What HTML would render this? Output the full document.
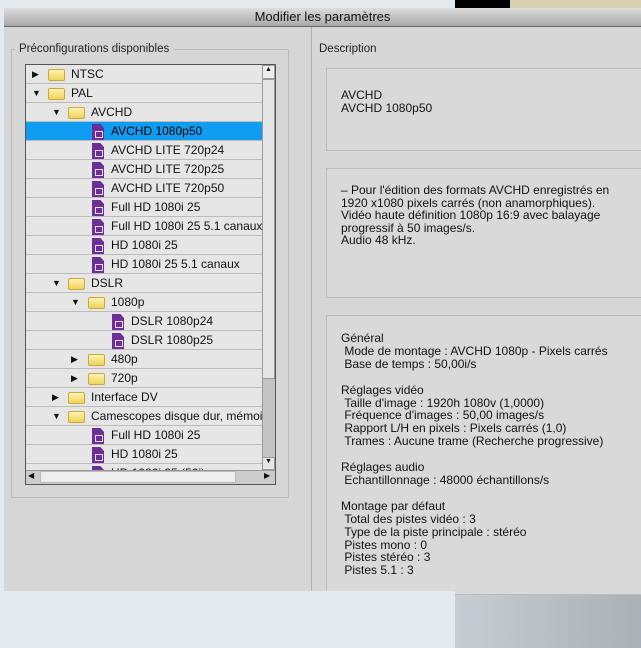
<!DOCTYPE html>
<html><head><meta charset="utf-8"><style>
*{margin:0;padding:0;box-sizing:border-box}
body{width:641px;height:648px;background:#e4eaed;position:relative;overflow:hidden;font-family:"Liberation Sans",sans-serif;font-size:12px;color:#111}
.abs{position:absolute}
#dlg{left:4px;top:8px;width:637px;height:583px;background:#d6d6d6}
#title{left:4px;top:8px;width:637px;height:19px;background:linear-gradient(#dcdcdc,#a9a9a9);border-bottom:1px solid #666;text-align:center;font-size:13px;line-height:18px}
.fs{border:1px solid #bdbdbd}
.lg{background:#d6d6d6;padding:0 4px;font-size:11.5px;color:#222}
#tree{left:25px;top:64px;width:251px;height:421px;border:1px solid #555;background:#e8e8e8;overflow:hidden}
.row{position:absolute;left:0;width:236px;height:19px;border-bottom:1px solid #bbb;white-space:nowrap;line-height:18px;font-size:12px;background:#e6e6e6}
.sel{background:#109cf0;color:#000}
.ar{position:absolute;top:0;font-size:9px}
.fo{position:absolute;top:4px;width:17px;height:12px;background:linear-gradient(#fff4b0,#efd25a);border:1px solid #c9a93a;border-radius:2px}
.fi{position:absolute;top:2px;width:12px;height:16px;background:#6b2f96;clip-path:polygon(0 0,70% 0,100% 25%,100% 100%,0 100%)}
.fi:after{content:"";position:absolute;left:3px;top:7px;width:6px;height:5px;border:1px solid #e7d8f3}
.tx{position:absolute;top:0}
.box{background:#d9d9d9;border:1px solid #bcbcbc;left:326px;width:320px;font-size:12px;line-height:12.5px;padding:0 0 0 14px;white-space:nowrap}
</style></head><body>
<div class="abs" style="left:455px;top:591px;width:186px;height:57px;background:linear-gradient(90deg,#c7ced3,#a9b1b6)"></div>
<div class="abs" style="left:455px;top:0;width:186px;height:8px;background:#000"></div>
<div class="abs" style="left:510px;top:0;width:131px;height:8px;background:#d8d0b0"></div>
<div id="dlg" class="abs"></div>
<div id="title" class="abs">Modifier les paramètres</div>
<div class="abs fs" style="left:11px;top:49px;width:278px;height:449px"></div>
<div class="abs lg" style="left:15px;top:43px">Préconfigurations disponibles</div>
<div class="abs" style="left:311px;top:27px;width:1px;height:564px;background:#b0b0b0"></div>
<div class="abs lg" style="left:315px;top:43px">Description</div>
<div id="tree" class="abs">
<div class="row" style="top:0"><span class="ar" style="left:6px">▶</span><span class="fo" style="left:22px"></span><span class="tx" style="left:45px">NTSC</span></div>
<div class="row" style="top:19px"><span class="ar" style="left:6px">▼</span><span class="fo" style="left:22px"></span><span class="tx" style="left:45px">PAL</span></div>
<div class="row" style="top:38px"><span class="ar" style="left:26px">▼</span><span class="fo" style="left:42px"></span><span class="tx" style="left:65px">AVCHD</span></div>
<div class="row sel" style="top:57px"><span class="fi" style="left:66px"></span><span class="tx" style="left:85px">AVCHD 1080p50</span></div>
<div class="row" style="top:76px"><span class="fi" style="left:66px"></span><span class="tx" style="left:85px">AVCHD LITE 720p24</span></div>
<div class="row" style="top:95px"><span class="fi" style="left:66px"></span><span class="tx" style="left:85px">AVCHD LITE 720p25</span></div>
<div class="row" style="top:114px"><span class="fi" style="left:66px"></span><span class="tx" style="left:85px">AVCHD LITE 720p50</span></div>
<div class="row" style="top:133px"><span class="fi" style="left:66px"></span><span class="tx" style="left:85px">Full HD 1080i 25</span></div>
<div class="row" style="top:152px"><span class="fi" style="left:66px"></span><span class="tx" style="left:85px">Full HD 1080i 25 5.1 canaux</span></div>
<div class="row" style="top:171px"><span class="fi" style="left:66px"></span><span class="tx" style="left:85px">HD 1080i 25</span></div>
<div class="row" style="top:190px"><span class="fi" style="left:66px"></span><span class="tx" style="left:85px">HD 1080i 25 5.1 canaux</span></div>
<div class="row" style="top:209px"><span class="ar" style="left:26px">▼</span><span class="fo" style="left:42px"></span><span class="tx" style="left:65px">DSLR</span></div>
<div class="row" style="top:228px"><span class="ar" style="left:45px">▼</span><span class="fo" style="left:62px"></span><span class="tx" style="left:85px">1080p</span></div>
<div class="row" style="top:247px"><span class="fi" style="left:86px"></span><span class="tx" style="left:105px">DSLR 1080p24</span></div>
<div class="row" style="top:266px"><span class="fi" style="left:86px"></span><span class="tx" style="left:105px">DSLR 1080p25</span></div>
<div class="row" style="top:285px"><span class="ar" style="left:45px">▶</span><span class="fo" style="left:62px"></span><span class="tx" style="left:85px">480p</span></div>
<div class="row" style="top:304px"><span class="ar" style="left:45px">▶</span><span class="fo" style="left:62px"></span><span class="tx" style="left:85px">720p</span></div>
<div class="row" style="top:323px"><span class="ar" style="left:26px">▶</span><span class="fo" style="left:42px"></span><span class="tx" style="left:65px">Interface DV</span></div>
<div class="row" style="top:342px"><span class="ar" style="left:26px">▼</span><span class="fo" style="left:42px"></span><span class="tx" style="left:65px">Camescopes disque dur, mémoi</span></div>
<div class="row" style="top:361px"><span class="fi" style="left:66px"></span><span class="tx" style="left:85px">Full HD 1080i 25</span></div>
<div class="row" style="top:380px"><span class="fi" style="left:66px"></span><span class="tx" style="left:85px">HD 1080i 25</span></div>
<div class="row" style="top:399px"><span class="fi" style="left:66px"></span><span class="tx" style="left:85px">HD 1080i 25 (50i)</span></div>
<div class="abs" style="left:236px;top:0;width:13px;height:405px;background:#c4c4c4;border-left:1px solid #999"></div>
<div class="abs" style="left:236px;top:0;width:13px;height:14px;background:#eee;border:1px solid #999;font-size:7px;text-align:center">▲</div>
<div class="abs" style="left:236px;top:14px;width:13px;height:300px;background:#e6e6e6;border:1px solid #999"></div>
<div class="abs" style="left:236px;top:392px;width:13px;height:13px;background:#e6e6e6;border:1px solid #999;font-size:7px;text-align:center">▼</div>
<div class="abs" style="left:0;top:405px;width:249px;height:14px;background:#ccc;border-top:1px solid #999"></div>
<div class="abs" style="left:14px;top:406px;width:196px;height:12px;background:#eee;border:1px solid #bbb"></div>
<div class="abs" style="left:2px;top:406px;font-size:8px">◀</div>
<div class="abs" style="left:238px;top:406px;font-size:8px">▶</div>
</div>
<div class="abs box" style="top:68px;height:83px;padding-top:20px">AVCHD<br>AVCHD 1080p50</div>
<div class="abs box" style="top:168px;height:130px;padding-top:15px">– Pour l'édition des formats AVCHD enregistrés en<br>1920 x1080 pixels carrés (non anamorphiques).<br>Vidéo haute définition 1080p 16:9 avec balayage<br>progressif à 50 images/s.<br>Audio 48 kHz.</div>
<div class="abs box" style="top:315px;height:280px;padding-top:16px;line-height:12.9px">Général<br>&nbsp;Mode de montage : AVCHD 1080p - Pixels carrés<br>&nbsp;Base de temps : 50,00i/s<br><br>Réglages vidéo<br>&nbsp;Taille d'image : 1920h 1080v (1,0000)<br>&nbsp;Fréquence d'images : 50,00 images/s<br>&nbsp;Rapport L/H en pixels : Pixels carrés (1,0)<br>&nbsp;Trames : Aucune trame (Recherche progressive)<br><br>Réglages audio<br>&nbsp;Echantillonnage : 48000 échantillons/s<br><br>Montage par défaut<br>&nbsp;Total des pistes vidéo : 3<br>&nbsp;Type de la piste principale : stéréo<br>&nbsp;Pistes mono : 0<br>&nbsp;Pistes stéréo : 3<br>&nbsp;Pistes 5.1 : 3</div>
<div class="abs" style="left:0;top:591px;width:455px;height:57px;background:#e4eaed"></div>
</body></html>
